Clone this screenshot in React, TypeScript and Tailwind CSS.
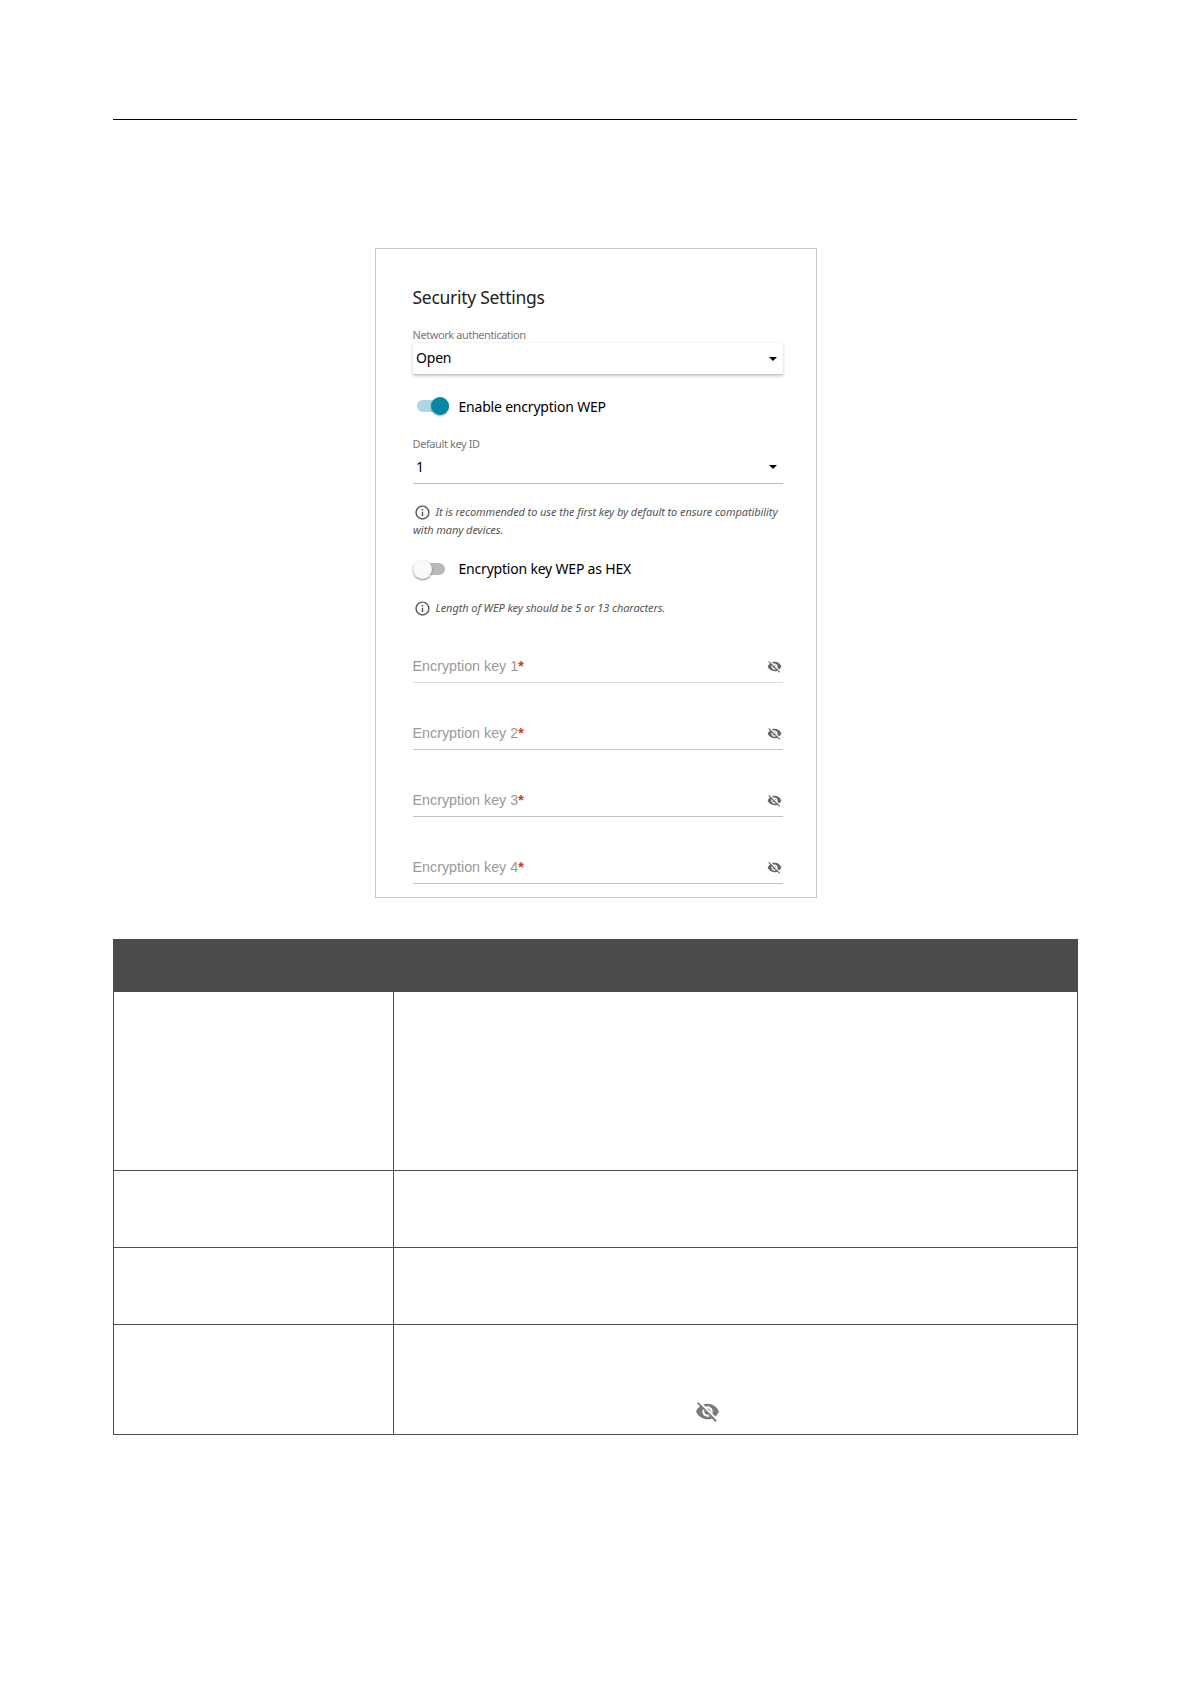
import { MdInfoOutline, MdVisibilityOff } from "react-icons/md";

const keys = [1, 2, 3, 4];

function SelectArrow() {
    return (
        <svg className="mr-1.5 shrink-0" width="8" height="4" viewBox="0 0 8 4">
            <path d="M0 0h8L4 4z" fill="#000" />
        </svg>
    );
}

function Toggle({ on }: { on?: boolean }) {
    if (on) {
        return (
            <span className="ml-1 flex h-3 w-8 items-center justify-end rounded-full bg-[#add8e3]">
                <span className="size-[18px] shrink-0 rounded-full bg-[#0787a6] shadow-[0_1px_2px_rgba(0,0,0,0.35)]" />
            </span>
        );
    }
    return (
        <span className="flex h-3 w-8 items-center rounded-full bg-[#b9b9b9]">
            <span className="size-[19px] shrink-0 rounded-full bg-[#fafafa] shadow-[0_1px_2px_rgba(0,0,0,0.5)]" />
        </span>
    );
}

function Hint({ children }: { children: string }) {
    return (
        <p className="pl-[0.5px] text-[11px] leading-[18px] tracking-[-0.08px] whitespace-normal text-[#555] italic">
            <MdInfoOutline className="mr-[5px] ml-[0.5px] inline size-[17px] align-[-5px] text-[#555]" />
            {children}
        </p>
    );
}

function KeyField({ index }: { index: number }) {
    return (
        <div className="flex h-[67px] items-end justify-between border-b border-[#c4c4c4] pb-2 font-['Liberation_Sans',sans-serif] first:h-[66px] first:border-[#ddd]">
            <span className="text-[14.3px] leading-4 text-[#999]">
                Encryption key {index}
                <span className="font-bold text-[#d23c10]">*</span>
            </span>
            <MdVisibilityOff className="mr-[1px] size-[15px] text-[#666]" />
        </div>
    );
}

function SecuritySettings() {
    return (
        <section className="mx-auto mt-32 h-[650px] w-[442px] border border-[#c8c8c8] pt-9 pr-[33px] pl-[37px] font-['Noto_Sans',sans-serif] whitespace-nowrap">
            <h1 className="text-[17.5px] leading-6 tracking-[-0.28px] text-[#222]">Security Settings</h1>

            <div className="mt-[18px] text-[11px] leading-4 tracking-[-0.42px] text-[#777]">Network authentication</div>
            <div className="flex h-8 items-center justify-between border-b border-[#c8c8c8] pl-[3.5px] text-[14px] tracking-[-0.2px] text-black shadow-[0_1px_3px_rgba(0,0,0,0.22)]">
                <span className="-mt-[3px]">Open</span>
                <SelectArrow />
            </div>

            <div className="mt-[19px] flex h-6 items-center">
                <Toggle on />
                <span className="ml-[10px] text-[14px] tracking-[-0.2px] text-black">Enable encryption WEP</span>
            </div>

            <div className="mt-[18px] text-[11px] leading-4 tracking-[-0.4px] text-[#777]">Default key ID</div>
            <div className="flex h-8 items-center justify-between border-b border-[#bbb] pb-px pl-[3.5px] text-[14px] text-black">
                <span className="pb-px">1</span>
                <SelectArrow />
            </div>

            <div className="mt-[19px]">
                <Hint>It is recommended to use the first key by default to ensure compatibility with many devices.</Hint>
            </div>

            <div className="mt-[18px] flex h-6 items-center">
                <Toggle />
                <span className="ml-[14px] pb-px text-[14px] tracking-[-0.2px] text-black">Encryption key WEP as HEX</span>
            </div>

            <div className="mt-[18px]">
                <Hint>Length of WEP key should be 5 or 13 characters.</Hint>
            </div>

            <div>
                {keys.map((key) => (
                    <KeyField key={key} index={key} />
                ))}
            </div>
        </section>
    );
}

function ParameterTable() {
    return (
        <table className="mt-[41px] w-[965px] table-fixed border-separate border-spacing-0 border-l border-[#4b4b4b]">
            <colgroup>
                <col className="w-[280px]" />
                <col />
            </colgroup>
            <thead>
                <tr className="h-[53px] bg-[#4b4b4b]">
                    <th colSpan={2} />
                </tr>
            </thead>
            <tbody>
                <tr className="h-[179px]">
                    <td className="border-r border-b border-[#4b4b4b]" />
                    <td className="border-r border-b border-[#4b4b4b]" />
                </tr>
                <tr className="h-[77px]">
                    <td className="border-r border-b border-[#4b4b4b]" />
                    <td className="border-r border-b border-[#4b4b4b]" />
                </tr>
                <tr className="h-[77px]">
                    <td className="border-r border-b border-[#4b4b4b]" />
                    <td className="border-r border-b border-[#4b4b4b]" />
                </tr>
                <tr className="h-[110px]">
                    <td className="border-r border-b border-[#4b4b4b]" />
                    <td className="border-r border-b border-[#4b4b4b] p-0 pb-[10px] pl-[301px] align-bottom">
                        <MdVisibilityOff className="size-[25px] text-[#7a7a7a]" />
                    </td>
                </tr>
            </tbody>
        </table>
    );
}

export default function App() {
    return (
        <main className="h-[1684px] w-[1191px] bg-white pt-[119px] pl-[113px]">
            <div className="w-[965px]">
                <hr className="w-[964px] border-t border-black" />
                <SecuritySettings />
                <ParameterTable />
            </div>
        </main>
    );
}
